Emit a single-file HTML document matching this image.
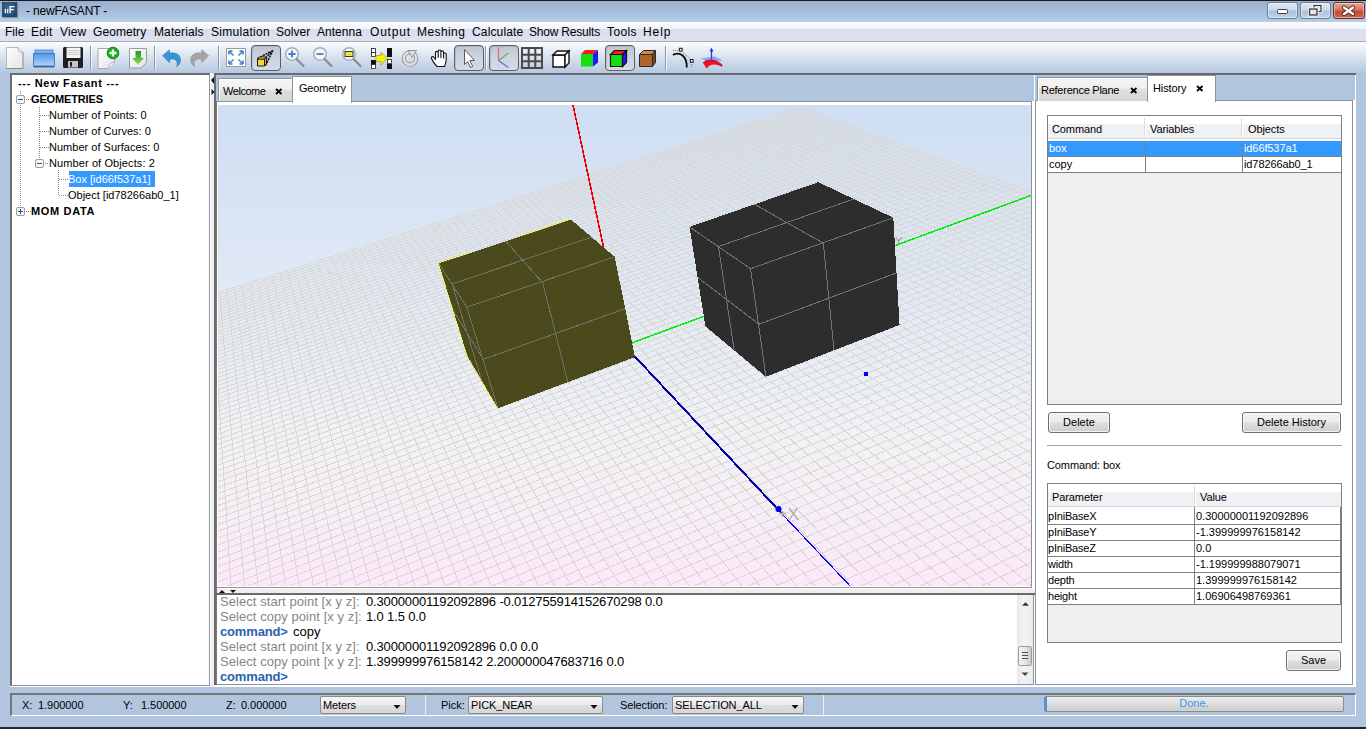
<!DOCTYPE html><html><head><meta charset="utf-8"><style>
*{margin:0;padding:0;box-sizing:border-box}
html,body{width:1366px;height:729px;overflow:hidden}
body{position:relative;background:#b1c5df;font-family:"Liberation Sans", sans-serif;font-size:11px;color:#000}
.a{position:absolute}
.t{position:absolute;white-space:pre;line-height:1;font-family:"Liberation Sans", sans-serif}
svg{position:absolute;overflow:visible}
</style></head><body><div class="a" style="left:0px;top:0px;width:1366px;height:1px;background:#1e1a18"></div>
<div class="a" style="left:0px;top:1px;width:1366px;height:21px;background:linear-gradient(#98b0cd,#a7bfdb 55%,#b6cee7)"></div>
<div class="a" style="left:2px;top:2px;width:15px;height:15px;background:radial-gradient(circle at 45% 40%,#3f6f98,#21486c 75%,#1c3d5c);box-shadow:1px 1px 1px rgba(0,0,0,.25)"></div>
<svg style="left:0;top:0" width="20" height="20"><path d="M5.4 9v4.2M7.7 9v4.2" stroke="#fff" stroke-width="1.2"/><path d="M10.1 13.2V6.6h4.3M10.1 9.6h3.7" stroke="#fff" stroke-width="1.3" fill="none"/></svg>
<div class="t" style="left:26px;top:5px;font-size:12px;color:#000;font-weight:normal;letter-spacing:-0.15px">- newFASANT -</div>
<div class="a" style="left:1267px;top:2px;width:31px;height:17px;border:1px solid #6d7f97;border-radius:3px;background:linear-gradient(#dbe7f4,#c9daee 48%,#a9c0dc 52%,#bcd3ec);box-shadow:inset 0 0 0 1px rgba(255,255,255,.45)"></div>
<div class="a" style="left:1300px;top:2px;width:31px;height:17px;border:1px solid #6d7f97;border-radius:3px;background:linear-gradient(#dbe7f4,#c9daee 48%,#a9c0dc 52%,#bcd3ec);box-shadow:inset 0 0 0 1px rgba(255,255,255,.45)"></div>
<div class="a" style="left:1333px;top:2px;width:32px;height:17px;border:1px solid #6b2d25;border-radius:3px;background:linear-gradient(#e6a492,#d37762 48%,#c24a2c 52%,#d0684a);box-shadow:inset 0 0 0 1px rgba(255,255,255,.45)"></div>
<svg style="left:1260px;top:0" width="106" height="22"><rect x="17.5" y="9.5" width="10" height="4" rx="1" fill="#fff" stroke="#3c3c3c"/><rect x="54" y="5.5" width="7" height="6" fill="none" stroke="#fff" stroke-width="3"/><rect x="54" y="5.5" width="7" height="6" fill="none" stroke="#3c3c3c" stroke-width="1.3"/><rect x="49.5" y="9" width="7.5" height="6" fill="#c9d9ec" stroke="#fff" stroke-width="3"/><rect x="49.5" y="9" width="7.5" height="6" fill="#c9d9ec" stroke="#3c3c3c" stroke-width="1.3"/><rect x="51.5" y="11" width="3.5" height="2" fill="none" stroke="#fff" stroke-width=".8"/><path d="M84 7.5l9 6.5M93 7.5l-9 6.5" stroke="#4a2a25" stroke-width="4.2" stroke-linecap="round"/><path d="M84 7.5l9 6.5M93 7.5l-9 6.5" stroke="#fff" stroke-width="2.4" stroke-linecap="round"/></svg>
<div class="a" style="left:0px;top:22px;width:1366px;height:19px;background:linear-gradient(#fbfcfe,#f1f3f9 35%,#dadfee 36%,#dce2f0)"></div>
<div class="a" style="left:0px;top:41px;width:1366px;height:1px;background:#a9acb3"></div>
<div class="t" style="left:5px;top:26px;font-size:12px;color:#000;font-weight:normal;letter-spacing:0px">File</div>
<div class="t" style="left:31px;top:26px;font-size:12px;color:#000;font-weight:normal;letter-spacing:0.2px">Edit</div>
<div class="t" style="left:60px;top:26px;font-size:12px;color:#000;font-weight:normal;letter-spacing:0.1px">View</div>
<div class="t" style="left:93px;top:26px;font-size:12px;color:#000;font-weight:normal;letter-spacing:0.07px">Geometry</div>
<div class="t" style="left:154px;top:26px;font-size:12px;color:#000;font-weight:normal;letter-spacing:0.11px">Materials</div>
<div class="t" style="left:211px;top:26px;font-size:12px;color:#000;font-weight:normal;letter-spacing:0.3px">Simulation</div>
<div class="t" style="left:276px;top:26px;font-size:12px;color:#000;font-weight:normal;letter-spacing:0.06px">Solver</div>
<div class="t" style="left:317px;top:26px;font-size:12px;color:#000;font-weight:normal;letter-spacing:0.03px">Antenna</div>
<div class="t" style="left:370px;top:26px;font-size:12px;color:#000;font-weight:normal;letter-spacing:0.8px">Output</div>
<div class="t" style="left:417px;top:26px;font-size:12px;color:#000;font-weight:normal;letter-spacing:0.42px">Meshing</div>
<div class="t" style="left:472px;top:26px;font-size:12px;color:#000;font-weight:normal;letter-spacing:0.15px">Calculate</div>
<div class="t" style="left:529px;top:26px;font-size:12px;color:#000;font-weight:normal;letter-spacing:-0.2px">Show Results</div>
<div class="t" style="left:607px;top:26px;font-size:12px;color:#000;font-weight:normal;letter-spacing:0.4px">Tools</div>
<div class="t" style="left:643px;top:26px;font-size:12px;color:#000;font-weight:normal;letter-spacing:0.9px">Help</div>
<div class="a" style="left:0px;top:42px;width:1366px;height:31px;background:linear-gradient(#fefeff,#e9eff7 25%,#cfdbeb 62%,#b5c8e1)"></div>
<div class="a" style="left:90px;top:46px;width:1px;height:24px;background:#8e99a8;box-shadow:1px 0 0 rgba(255,255,255,.8)"></div>
<div class="a" style="left:154px;top:46px;width:1px;height:24px;background:#8e99a8;box-shadow:1px 0 0 rgba(255,255,255,.8)"></div>
<div class="a" style="left:218px;top:46px;width:1px;height:24px;background:#8e99a8;box-shadow:1px 0 0 rgba(255,255,255,.8)"></div>
<div class="a" style="left:485px;top:46px;width:1px;height:24px;background:#8e99a8;box-shadow:1px 0 0 rgba(255,255,255,.8)"></div>
<div class="a" style="left:665px;top:46px;width:1px;height:24px;background:#8e99a8;box-shadow:1px 0 0 rgba(255,255,255,.8)"></div>
<div class="a" style="left:251px;top:45px;width:30px;height:26px;border:1px solid #5a6068;border-radius:4px;background:linear-gradient(#bfc6d1,#cdd4de 50%,#d3dbe6);box-shadow:inset 1px 1px 1px rgba(0,0,0,.1)"></div>
<div class="a" style="left:454px;top:45px;width:30px;height:26px;border:1px solid #5a6068;border-radius:4px;background:linear-gradient(#bfc6d1,#cdd4de 50%,#d3dbe6);box-shadow:inset 1px 1px 1px rgba(0,0,0,.1)"></div>
<div class="a" style="left:489px;top:45px;width:30px;height:26px;border:1px solid #5a6068;border-radius:4px;background:linear-gradient(#bfc6d1,#cdd4de 50%,#d3dbe6);box-shadow:inset 1px 1px 1px rgba(0,0,0,.1)"></div>
<div class="a" style="left:605px;top:45px;width:30px;height:26px;border:1px solid #5a6068;border-radius:4px;background:linear-gradient(#bfc6d1,#cdd4de 50%,#d3dbe6);box-shadow:inset 1px 1px 1px rgba(0,0,0,.1)"></div>
<svg style="left:0;top:0" width="740" height="76"><defs><linearGradient id="pg" x1="0" y1="0" x2="1" y2="1"><stop offset="0" stop-color="#ffffff"/><stop offset="1" stop-color="#e2e2e2"/></linearGradient><linearGradient id="fg" x1="0" y1="0" x2="0" y2="1"><stop offset="0" stop-color="#5896e6"/><stop offset="1" stop-color="#acd2fa"/></linearGradient></defs><path d="M6.5 47.5h11.5l5 5v16h-16.5z" fill="url(#pg)" stroke="#b8b8b8"/><path d="M23 68.5h-16.5" stroke="#8a8a8a"/><path d="M23 52.5v16" stroke="#a0a0a0"/><path d="M18 47.5c.5 3 0 5 5 5" fill="#e8e8e8" stroke="#b0b0b0"/><rect x="35" y="50" width="18" height="3.5" fill="#80aee6" stroke="#4a86d0" stroke-width=".8"/><rect x="33.5" y="53.5" width="21" height="12.5" fill="url(#fg)" stroke="#3f7fd0" stroke-width="1"/><path d="M34 66.8h20" stroke="#3c4a60" stroke-width="1.2"/><rect x="63" y="47" width="20" height="21" rx="1.5" fill="#1e1f24"/><rect x="66.5" y="47.5" width="14" height="10.5" fill="#f4f4f4"/><path d="M67.5 50.5h12M67.5 52.5h12M67.5 54.5h12" stroke="#c8c4be" stroke-width=".8"/><rect x="68" y="61" width="10" height="6.5" fill="#c4c4c4"/><rect x="70" y="62" width="2" height="4.5" fill="#1e1f24"/><path d="M98 48.5h16.5v14l-6 6h-10.5z" fill="url(#pg)" stroke="#a8a8a8"/><path d="M108.5 68.5c0-3 .5-6 6-6" fill="#f4f4f4" stroke="#b4b4b4"/><circle cx="113" cy="53" r="5.8" fill="#1eaa1e" stroke="#0a8a0a"/><path d="M109.5 53h7M113 49.5v7" stroke="#fff" stroke-width="2.3"/><defs><linearGradient id="ag" x1="0" y1="0" x2="0" y2="1"><stop offset="0" stop-color="#1c9a2a"/><stop offset="1" stop-color="#8cdc5a"/></linearGradient></defs><path d="M129.5 48.5h17v14l-5.5 5.5h-11.5z" fill="url(#pg)" stroke="#9c9c9c"/><path d="M135.5 51h5.5v7h3l-6 6.5-6-6.5h3.5z" fill="url(#ag)"/><path d="M162.5 57.5L169.5 51.5V55C175.5 53.5 181 56.5 180.5 62.5C180.3 65 178.8 67 176.5 68.5C177.8 65.5 177.3 62.5 174.5 61.3C172.8 60.6 171 60.8 169.5 61.5V64.5Z" fill="#3296d8" stroke="#2a70b0" stroke-width=".5" transform="translate(0,-1.8)"/><path d="M 208.75 57.50 L 201.75 51.50 V 55.00 C 195.75 53.50 190.25 56.50 190.75 62.50 C 190.95 65.00 192.45 67.00 194.75 68.50 C 193.45 65.50 193.95 62.50 196.75 61.30 C 198.45 60.60 200.25 60.80 201.75 61.50 V 64.50 Z" fill="#a4a4a4" stroke="#8a8a8a" stroke-width=".5" transform="translate(0,-1.8)"/><rect x="226.5" y="48.5" width="19" height="18" fill="#fdfdfd" stroke="#9a9a9a"/><path d="M229.5 51.5l4 4M242.5 51.5l-4 4M229.5 63.5l4-4M242.5 63.5l-4-4" stroke="#3a7cc8" stroke-width="1.4"/><path d="M229 51h3.5M229 51v3.5M243 51h-3.5M243 51v3.5M229 64h3.5M229 64v-3.5M243 64h-3.5M243 64v-3.5" stroke="#3a7cc8" stroke-width="1.6"/><path d="M257.5 58.5L273 50.5M265.5 58L273 50.5M265.5 65.5L273 50.5" stroke="#111" stroke-width="1.5" stroke-dasharray="2.2 .8" fill="none"/><path d="M257.5 66l7 0 0-7-7 0z" fill="#f8d838" stroke="#1a1a1a" stroke-width="1"/><path d="M257.5 59l2-2h7l-2 2z" fill="#fff27a" stroke="#1a1a1a" stroke-width="1"/><path d="M264.5 59l2-2v7l-2 2z" fill="#f0a020" stroke="#1a1a1a" stroke-width="1"/><circle cx="292" cy="54" r="6.3" fill="#f4f7fb" stroke="#a7aeb6" stroke-width="1.6"/><path d="M288.5 54h7M292 50.5v7" stroke="#3a80d0" stroke-width="1.8"/><path d="M296.5 59l7 7" stroke="#8c8c8c" stroke-width="2.2" stroke-linecap="round"/><circle cx="320" cy="54" r="6.3" fill="#f4f7fb" stroke="#a7aeb6" stroke-width="1.6"/><path d="M316.5 54h7" stroke="#3a80d0" stroke-width="1.8"/><path d="M324.5 59l7 7" stroke="#8c8c8c" stroke-width="2.2" stroke-linecap="round"/><circle cx="349" cy="54" r="6.3" fill="#f4f7fb" stroke="#a7aeb6" stroke-width="1.6"/><rect x="345" y="51.5" width="8" height="5" fill="#f2e040" stroke="#222" stroke-width=".9"/><path d="M353.5 59l7 7" stroke="#8c8c8c" stroke-width="2.2" stroke-linecap="round"/><rect x="371.5" y="48.5" width="4" height="4" fill="#fff" stroke="#222" stroke-width=".8"/><rect x="371.5" y="52.5" width="4" height="4" fill="#fff" stroke="#222" stroke-width=".8"/><rect x="371" y="60" width="5" height="5" fill="#111"/><rect x="371.5" y="64.5" width="4" height="4" fill="#fff" stroke="#222" stroke-width=".8"/><rect x="387" y="48" width="5" height="9" fill="#111"/><rect x="387.5" y="59.5" width="4" height="4" fill="#fff" stroke="#222" stroke-width=".8"/><rect x="387" y="64" width="5" height="5" fill="#111"/><path d="M376 55.5h5v-3.5l6 6.5-6 6.5v-3.5h-5z" fill="#f6ee10" stroke="#9a9000" stroke-width=".6"/><circle cx="410" cy="58.5" r="6.2" fill="none" stroke="#8e8e8e" stroke-width="4.2"/><circle cx="410" cy="58.5" r="6.2" fill="none" stroke="#e2e2e2" stroke-width="2.4"/><path d="M408 50.5h8.5l-4.5 7z" fill="#dcdcdc" stroke="#8e8e8e" stroke-width=".9"/><path d="M437 66.5C435 64.5 432.5 61 431.5 58.5C430.8 56.8 432.8 55.8 434 57.5L435.5 59.5V52.8C435.5 50.9 438.2 50.9 438.2 52.8V57.5V51.5C438.2 49.6 440.9 49.6 440.9 51.5V57.5V52.3C440.9 50.4 443.6 50.4 443.6 52.3V58V54.3C443.6 52.6 446.2 52.6 446.2 54.3V59.5C446.2 62.5 445 64.5 444.5 66.5Z" fill="#fff" stroke="#111" stroke-width="1.1" stroke-linejoin="round"/><path d="M464.5 49.5v15l3.2-3 2.8 6 2.2-1-2.8-6h4.6z" fill="#fff" stroke="#5a5a5a" stroke-width="1"/><path d="M498.5 47.5v13" stroke="#e07070" stroke-width="1.3"/><path d="M498.5 60.5l10-7.5" stroke="#50c050" stroke-width="1.3"/><path d="M498.5 60.5l10 7" stroke="#6a6ae0" stroke-width="1.3"/><rect x="522" y="48" width="20" height="20" fill="none" stroke="#4a4a4a" stroke-width="2"/><path d="M528.7 48v20M535.3 48v20M522 54.7h20M522 61.3h20" stroke="#4a4a4a" stroke-width="2"/><path d="M553 55h12v12h-12z" fill="#fff" stroke="#111" stroke-width="1.4"/><path d="M553 55l4-4h12l-4 4z" fill="#fff" stroke="#111" stroke-width="1.4"/><path d="M565 55l4-4v12l-4 4z" fill="#fff" stroke="#111" stroke-width="1.4"/><path d="M581 54h12v12.5h-12z" fill="#12e012"/><path d="M581 54l4-4h13l-5 4z" fill="#ff1a1a"/><path d="M593 54l5-4v12.5l-5 4z" fill="#1a1aff"/><path d="M610.5 54.5h12v12h-12z" fill="#12e012" stroke="#111" stroke-width="1.2"/><path d="M610.5 54.5l4-4h12l-4 4z" fill="#ff1a1a" stroke="#111" stroke-width="1.2"/><path d="M622.5 54.5l4-4v12l-4 4z" fill="#1a1aff" stroke="#111" stroke-width="1.2"/><path d="M639.5 54.5h13v12h-13z" fill="#b0642a" stroke="#2a2a2a"/><path d="M639.5 54.5l4-4h12l-3 4z" fill="#cf8a4a" stroke="#2a2a2a"/><path d="M652.5 54.5l3-4v12l-3 4z" fill="#7a4218" stroke="#2a2a2a"/><path d="M673 54.8C680 51.5 687 55.5 686.8 67.5" fill="none" stroke="#111" stroke-width="1.9"/><rect x="679.3" y="48.3" width="2.8" height="2.8" fill="#fff" stroke="#111" stroke-width="1"/><rect x="690.3" y="59.5" width="2.8" height="2.8" fill="#fff" stroke="#111" stroke-width="1"/><path d="M673 50.5h5M683 52.5l6.5 6M691.7 64v4" stroke="#444" stroke-width=".8" stroke-dasharray="1 1.2"/><path d="M701 58.5L714.5 56.5L722.5 60.5L709 62.3z" fill="#8890f0" opacity=".85"/><path d="M703 62.8C707 59.3 716 58.5 722.5 65.5L721.5 66.8C716 63.5 710 63.5 706.5 68.5z" fill="#f01020"/><path d="M703 62.8C707 59.3 716 58.5 722.5 65.5" fill="none" stroke="#900018" stroke-width=".8"/><path d="M711.5 59.5V50" stroke="#2030f0" stroke-width="1.3"/><path d="M709.6 51.6L711.5 47.6L713.4 51.6z" fill="#2030f0"/></svg>
<div class="a" style="left:10px;top:73px;width:200px;height:613px;background:#fff;border-top:2px solid #6e6e6e;border-left:2px solid #6e6e6e;border-right:1px solid #8d939b;border-bottom:1px solid #8d939b"></div>
<div class="a" style="left:10px;top:686px;width:201px;height:1px;background:#fff"></div>
<div class="t" style="left:18px;top:78px;font-size:11px;color:#000;font-weight:bold;letter-spacing:0.67px">--- New Fasant ---</div>
<div class="t" style="left:31px;top:94px;font-size:11px;color:#000;font-weight:bold;letter-spacing:-0.15px">GEOMETRIES</div>
<div class="t" style="left:49px;top:110px;font-size:11px;color:#000;font-weight:normal;letter-spacing:0.02px">Number of Points: 0</div>
<div class="t" style="left:49px;top:126px;font-size:11px;color:#000;font-weight:normal;letter-spacing:0.02px">Number of Curves: 0</div>
<div class="t" style="left:49px;top:142px;font-size:11px;color:#000;font-weight:normal;letter-spacing:0.02px">Number of Surfaces: 0</div>
<div class="t" style="left:49px;top:158px;font-size:11px;color:#000;font-weight:normal;letter-spacing:0.1px">Number of Objects: 2</div>
<div class="a" style="left:69px;top:171px;width:86px;height:16px;background:#3399ff"></div>
<div class="t" style="left:68px;top:174px;font-size:11px;color:#fff;font-weight:normal;">Box [id66f537a1]</div>
<div class="t" style="left:68px;top:190px;font-size:11px;color:#000;font-weight:normal;">Object [id78266ab0_1]</div>
<div class="t" style="left:31px;top:206px;font-size:11px;color:#000;font-weight:bold;letter-spacing:0.65px">MOM DATA</div>
<svg style="left:0;top:0" width="212" height="230"><path d="M20.5 91V95" stroke="#8a8a8a" stroke-dasharray="1 1"/><path d="M20.5 105V207" stroke="#8a8a8a" stroke-dasharray="1 1"/><path d="M26 99.5H31" stroke="#8a8a8a" stroke-dasharray="1 1"/><path d="M26 211.5H31" stroke="#8a8a8a" stroke-dasharray="1 1"/><path d="M39.5 107V159" stroke="#8a8a8a" stroke-dasharray="1 1"/><path d="M40 115.5H49" stroke="#8a8a8a" stroke-dasharray="1 1"/><path d="M40 131.5H49" stroke="#8a8a8a" stroke-dasharray="1 1"/><path d="M40 147.5H49" stroke="#8a8a8a" stroke-dasharray="1 1"/><path d="M45 163.5H49" stroke="#8a8a8a" stroke-dasharray="1 1"/><path d="M58.5 170V195" stroke="#8a8a8a" stroke-dasharray="1 1"/><path d="M59 179.5H68" stroke="#8a8a8a" stroke-dasharray="1 1"/><path d="M59 195.5H68" stroke="#8a8a8a" stroke-dasharray="1 1"/><rect x="16.5" y="95.5" width="8" height="8" fill="#f6f6f6" stroke="#9c9c9c" rx="1.5"/><path d="M18 99.5h5" stroke="#3050a8"/><rect x="35.5" y="159.5" width="8" height="8" fill="#f6f6f6" stroke="#9c9c9c" rx="1.5"/><path d="M37 163.5h5" stroke="#3050a8"/><rect x="16.5" y="207.5" width="8" height="8" fill="#f6f6f6" stroke="#9c9c9c" rx="1.5"/><path d="M18 211.5h5" stroke="#3050a8"/><path d="M20.5 209v5" stroke="#3050a8"/></svg>
<div class="a" style="left:210px;top:73px;width:1px;height:614px;background:#fff"></div>
<div class="a" style="left:211px;top:73px;width:3px;height:614px;background:#efefef"></div>
<svg style="left:208px;top:74px" width="8" height="30"><path d="M3 6l3-3v7z" fill="#111"/><path d="M3.5 15l3 3-3 3z" fill="#111"/></svg>
<div class="a" style="left:214px;top:73px;width:821px;height:2px;background:#6a6a6a"></div>
<div class="a" style="left:214px;top:75px;width:2px;height:612px;background:#6a6a6a"></div>
<div class="a" style="left:216px;top:101px;width:1px;height:586px;background:#7a7a7a"></div>
<div class="a" style="left:218px;top:78px;width:75px;height:24px;border:1px solid #8d939b;border-bottom:none;background:linear-gradient(#f6f6f6,#efefef 42%,#dedede 52%,#d5d5d5);box-shadow:inset 1px 1px 0 #fff"></div>
<div class="t" style="left:223px;top:86px;font-size:11px;color:#000;font-weight:normal;letter-spacing:-0.45px">Welcome</div>
<svg style="left:275px;top:88px" width="8" height="7"><path d="M1 1l5.5 5M6.5 1l-5.5 5" stroke="#000" stroke-width="1.8"/></svg>
<div class="a" style="left:217px;top:101px;width:815px;height:487px;background:#fff;border-top:1px solid #8d939b;border-right:1px solid #8d939b;border-bottom:1px solid #8d939b"></div>
<div class="a" style="left:292px;top:76px;width:60px;height:27px;border:1px solid #8d939b;border-bottom:none;background:#fff"></div>
<div class="t" style="left:299px;top:83px;font-size:11px;color:#000;font-weight:normal;letter-spacing:-0.2px">Geometry</div>
<svg style="left:218px;top:105px" width="813" height="481"><defs><linearGradient id="sky" x1="0" y1="0" x2="0" y2="1"><stop offset="0" stop-color="#cfdef3"/><stop offset=".4" stop-color="#e1e9f5"/><stop offset=".7" stop-color="#f1f2f5"/><stop offset=".85" stop-color="#f7eef6"/><stop offset="1" stop-color="#fde8f9"/></linearGradient><clipPath id="vc"><rect width="813" height="481"/></clipPath></defs><g clip-path="url(#vc)"><rect width="813" height="481" fill="url(#sky)"/><path d="M-92.4 217.0L582.5 2.3M-92.8 219.9L585.9 3.6M-93.2 222.9L589.4 4.9M-93.6 225.9L592.9 6.2M-94.0 228.9L596.5 7.5M-94.4 232.0L600.1 8.8M-94.8 235.1L603.7 10.1M-95.2 238.3L607.4 11.5M-95.7 241.5L611.1 12.8M-96.1 244.7L614.9 14.2M-96.5 248.0L618.7 15.6M-97.0 251.3L622.6 17.0M-97.4 254.7L626.5 18.4M-97.9 258.2L630.4 19.9M-98.4 261.7L634.4 21.3M-98.8 265.2L638.5 22.8M-99.3 268.8L642.5 24.3M-99.8 272.4L646.7 25.8M-100.3 276.1L650.9 27.4M-100.8 279.9L655.1 28.9M-101.3 283.7L659.4 30.5M-101.8 287.6L663.8 32.1M-102.4 291.5L668.2 33.7M-102.9 295.5L672.7 35.3M-103.4 299.5L677.2 37.0M-104.0 303.6L681.8 38.6M-104.6 307.8L686.4 40.3M-105.1 312.1L691.1 42.1M-105.7 316.4L695.9 43.8M-106.3 320.8L700.7 45.6M-106.9 325.2L705.6 47.4M-107.5 329.8L710.6 49.2M-108.1 334.4L715.6 51.0M-108.7 339.1L720.7 52.9M-109.4 343.8L725.9 54.8M-110.0 348.7L731.1 56.7M-110.7 353.6L736.4 58.6M-111.4 358.6L741.8 60.6M-112.0 363.7L747.3 62.6M-112.7 368.9L752.8 64.6M-113.5 374.2L758.4 66.6M-114.2 379.6L764.1 68.7M-114.9 385.1L769.9 70.8M-115.7 390.6L775.8 73.0M-116.4 396.3L781.7 75.2M-117.2 402.1L787.7 77.4M-118.0 408.0L793.9 79.6M-118.8 414.0L800.1 81.9M-119.6 420.1L806.4 84.2M-120.4 426.4L812.8 86.5M-121.3 432.8L819.3 88.9M-122.2 439.3L825.9 91.3M-123.1 445.9L832.6 93.8M-124.0 452.6L839.5 96.3M-124.9 459.5L846.4 98.8M-125.8 466.6L853.4 101.4M-126.8 473.8L860.6 104.0M-127.8 481.1L867.8 106.6M-128.8 488.6L875.2 109.3M-129.8 496.3L882.7 112.1M-130.9 504.1L890.4 114.9M-131.9 512.1L898.1 117.7M-133.0 520.2L906.0 120.6M-134.1 528.6L914.1 123.5M-135.3 537.1L922.2 126.5M-136.5 545.9L930.5 129.6M-137.7 554.8L939.0 132.6M-138.9 564.0L947.6 135.8M-140.1 573.4L956.4 139.0M-141.4 583.0L965.3 142.2M-142.8 592.8L974.3 145.6M-144.1 602.9L983.6 148.9M-145.5 613.2L993.0 152.4M-146.9 623.8L1002.6 155.9M-148.4 634.7L1012.4 159.5M-149.9 645.8L1022.3 163.1M-151.4 657.3L1032.5 166.8M-153.0 669.0L1042.8 170.6M-154.6 681.1L1053.4 174.4M-156.2 693.5L1064.1 178.4M-158.0 706.2L1075.1 182.4M-159.7 719.3L1086.3 186.5M-161.5 732.8L1097.7 190.7M-163.4 746.6L1109.4 194.9M-165.3 760.9L1121.3 199.3M-167.3 775.6L1133.4 203.7M-169.3 790.8L1145.9 208.2M-171.4 806.4L1158.5 212.9M-173.5 822.5L1171.5 217.6M-175.8 839.1L1184.7 222.4M-178.1 856.2L1198.3 227.4M-180.4 874.0L1212.1 232.4M-182.9 892.3L1226.2 237.6M-185.4 911.2L1240.7 242.9M-188.0 930.8L1255.5 248.3M-190.8 951.0L1270.7 253.9M-193.6 972.0L1286.2 259.5M-196.5 993.8L1302.1 265.3M-199.5 1016.3L1318.4 271.3M-202.7 1039.8L1335.1 277.4M-205.9 1064.1L1352.2 283.6M-92.4 217.0L-205.9 1064.1M-84.4 214.5L-182.0 1052.1M-76.5 211.9L-158.4 1040.3M-68.5 209.4L-135.0 1028.6M-60.6 206.9L-111.9 1017.0M-52.8 204.4L-89.0 1005.5M-44.9 201.9L-66.4 994.2M-37.1 199.4L-44.0 982.9M-29.3 197.0L-21.8 971.8M-21.6 194.5L0.2 960.8M-13.9 192.0L21.9 950.0M-6.2 189.6L43.4 939.2M1.5 187.2L64.7 928.5M9.1 184.7L85.8 918.0M16.7 182.3L106.6 907.5M24.3 179.9L127.3 897.2M31.9 177.5L147.7 887.0M39.4 175.1L167.9 876.8M46.9 172.7L188.0 866.8M54.4 170.3L207.8 856.8M61.8 168.0L227.5 847.0M69.3 165.6L246.9 837.3M76.7 163.2L266.2 827.6M84.0 160.9L285.3 818.0M91.4 158.6L304.2 808.6M98.7 156.2L322.9 799.2M106.0 153.9L341.4 789.9M113.3 151.6L359.8 780.7M120.5 149.3L378.0 771.6M127.7 147.0L396.0 762.6M134.9 144.7L413.9 753.6M142.1 142.4L431.6 744.8M149.2 140.2L449.1 736.0M156.3 137.9L466.5 727.3M163.4 135.6L483.7 718.7M170.5 133.4L500.7 710.1M177.5 131.2L517.6 701.7M184.5 128.9L534.4 693.3M191.5 126.7L551.0 685.0M198.5 124.5L567.4 676.7M205.5 122.3L583.7 668.6M212.4 120.1L599.9 660.5M219.3 117.9L615.9 652.4M226.1 115.7L631.8 644.5M233.0 113.5L647.5 636.6M239.8 111.3L663.1 628.8M246.6 109.2L678.5 621.1M253.4 107.0L693.9 613.4M260.2 104.9L709.1 605.8M266.9 102.7L724.1 598.2M273.6 100.6L739.1 590.7M280.3 98.5L753.9 583.3M287.0 96.3L768.6 576.0M293.6 94.2L783.1 568.7M300.2 92.1L797.6 561.4M306.8 90.0L811.9 554.3M313.4 87.9L826.1 547.2M320.0 85.8L840.2 540.1M326.5 83.8L854.1 533.1M333.0 81.7L868.0 526.2M339.5 79.6L881.7 519.3M346.0 77.6L895.4 512.5M352.4 75.5L908.9 505.7M358.8 73.5L922.3 499.0M365.2 71.4L935.6 492.3M371.6 69.4L948.8 485.7M378.0 67.4L961.9 479.1M384.3 65.4L974.9 472.6M390.6 63.4L987.7 466.2M396.9 61.4L1000.5 459.8M403.2 59.4L1013.2 453.4M409.5 57.4L1025.8 447.1M415.7 55.4L1038.3 440.9M421.9 53.4L1050.7 434.7M428.1 51.4L1062.9 428.5M434.3 49.5L1075.1 422.4M440.5 47.5L1087.2 416.4M446.6 45.6L1099.2 410.3M452.7 43.6L1111.2 404.4M458.8 41.7L1123.0 398.4M464.9 39.7L1134.7 392.6M471.0 37.8L1146.4 386.7M477.0 35.9L1157.9 380.9M483.0 34.0L1169.4 375.2M489.0 32.1L1180.8 369.5M495.0 30.2L1192.1 363.8M501.0 28.3L1203.3 358.2M506.9 26.4L1214.5 352.6M512.8 24.5L1225.5 347.1M518.7 22.6L1236.5 341.6M524.6 20.7L1247.4 336.1M530.5 18.9L1258.2 330.7M536.3 17.0L1269.0 325.3M542.2 15.2L1279.6 320.0M548.0 13.3L1290.2 314.7M553.8 11.5L1300.7 309.4M559.5 9.6L1311.2 304.2M565.3 7.8L1321.5 299.0M571.0 6.0L1331.8 293.8M576.8 4.2L1342.0 288.7M582.5 2.3L1352.2 283.6" stroke="#d9d8d5" stroke-width="1" fill="none" shape-rendering="crispEdges"/><line x1="354.8" y1="-1.0" x2="406.7" y2="240.6" stroke="#f00000" stroke-width="1.6" shape-rendering="crispEdges"/><line x1="406.7" y1="240.6" x2="814.0" y2="90.0" stroke="#00ee00" stroke-width="1.5" shape-rendering="crispEdges"/><line x1="406.7" y1="240.6" x2="560.0" y2="404.6" stroke="#0000a0" stroke-width="2" shape-rendering="crispEdges"/><line x1="560.0" y1="404.6" x2="634.0" y2="483.0" stroke="#0000ff" stroke-width="1.2" shape-rendering="crispEdges"/><circle cx="560.5" cy="404" r="3.1" fill="#0000f0"/><path d="M571 403L580.5 415M579.5 403L571.5 414.5M561 408.5h7M564.5 406v6" stroke="#a8a8a8" stroke-width="1.3" fill="none"/><path d="M677.5 132L680.5 136L684 132.5M680.5 136V139.5" stroke="#9a9a9a" stroke-width="1.1" fill="none"/><polygon points="220.7,158.4 353.0,114.6 396.7,151.8 417.0,252.0 279.9,303.3 249.4,251.1" fill="#4b4a1c" shape-rendering="crispEdges"/><line x1="248.8" y1="202.2" x2="396.7" y2="151.8" stroke="#727268" stroke-width="1" shape-rendering="crispEdges"/><line x1="248.8" y1="202.2" x2="279.9" y2="303.3" stroke="#727268" stroke-width="1" shape-rendering="crispEdges"/><line x1="248.8" y1="202.2" x2="220.7" y2="158.4" stroke="#727268" stroke-width="1" shape-rendering="crispEdges"/><line x1="373.6" y1="132.1" x2="233.9" y2="179.0" stroke="#727268" stroke-width="1" shape-rendering="crispEdges"/><line x1="287.7" y1="136.2" x2="323.8" y2="176.7" stroke="#727268" stroke-width="1" shape-rendering="crispEdges"/><line x1="407.2" y1="203.6" x2="264.9" y2="254.5" stroke="#727268" stroke-width="1" shape-rendering="crispEdges"/><line x1="324.4" y1="176.4" x2="349.9" y2="277.1" stroke="#727268" stroke-width="1" shape-rendering="crispEdges"/><line x1="264.5" y1="253.1" x2="235.1" y2="205.0" stroke="#727268" stroke-width="1" shape-rendering="crispEdges"/><line x1="234.1" y1="179.3" x2="263.9" y2="276.0" stroke="#727268" stroke-width="1" shape-rendering="crispEdges"/><polyline points="279.3,303.3 248.8,251.1 220.1,158.0 251.7,147.6" fill="none" stroke="#ffff00" stroke-width="1.3" stroke-dasharray="1.3 1.7"/><polyline points="300.1,131.6 353.0,114.0" fill="none" stroke="#ffff00" stroke-width="1.3" stroke-dasharray="1.3 1.7"/><polygon points="471.5,121.9 600.3,77.2 675.3,112.7 681.6,219.9 547.9,271.7 487.4,221.3" fill="#2d2d2d" shape-rendering="crispEdges"/><line x1="532.6" y1="163.7" x2="675.3" y2="112.7" stroke="#737373" stroke-width="1" shape-rendering="crispEdges"/><line x1="532.6" y1="163.7" x2="547.9" y2="271.7" stroke="#737373" stroke-width="1" shape-rendering="crispEdges"/><line x1="532.6" y1="163.7" x2="471.5" y2="121.9" stroke="#737373" stroke-width="1" shape-rendering="crispEdges"/><line x1="635.7" y1="94.0" x2="500.3" y2="141.6" stroke="#737373" stroke-width="1" shape-rendering="crispEdges"/><line x1="536.6" y1="99.3" x2="604.8" y2="137.9" stroke="#737373" stroke-width="1" shape-rendering="crispEdges"/><line x1="678.5" y1="167.9" x2="540.5" y2="219.4" stroke="#737373" stroke-width="1" shape-rendering="crispEdges"/><line x1="605.3" y1="137.7" x2="616.0" y2="245.3" stroke="#737373" stroke-width="1" shape-rendering="crispEdges"/><line x1="540.4" y1="218.7" x2="479.6" y2="172.4" stroke="#737373" stroke-width="1" shape-rendering="crispEdges"/><line x1="500.5" y1="141.8" x2="516.2" y2="245.3" stroke="#737373" stroke-width="1" shape-rendering="crispEdges"/><rect x="646" y="267" width="4" height="4" fill="#0000ff"/></g></svg>
<div class="a" style="left:1032px;top:101px;width:2px;height:492px;background:#fff"></div>
<div class="a" style="left:1034px;top:75px;width:1px;height:612px;background:#fff"></div>
<div class="a" style="left:217px;top:588px;width:818px;height:5px;background:#efefef;border-top:1px solid #fff"></div>
<svg style="left:218px;top:589px" width="20" height="5"><path d="M1 4l3-3 3 3z" fill="#111"/><path d="M12 1h6l-3 3z" fill="#111"/></svg>
<div class="a" style="left:214px;top:593px;width:821px;height:2px;background:#6a6a6a"></div>
<div class="a" style="left:217px;top:595px;width:817px;height:90px;background:#fff;border-right:1px solid #8d939b;border-bottom:1px solid #8d939b"></div>
<div class="a" style="left:214px;top:685px;width:821px;height:2px;background:#fff"></div>
<div class="t" style="left:220px;top:595px;font-size:13px;color:#868686;font-weight:normal;letter-spacing:0.06px">Select start point [x y z]:</div>
<div class="t" style="left:366px;top:595px;font-size:13px;color:#000;font-weight:normal;letter-spacing:-0.15px">0.30000001192092896 -0.012755914152670298 0.0</div>
<div class="t" style="left:220px;top:610px;font-size:13px;color:#868686;font-weight:normal;letter-spacing:0.06px">Select copy point [x y z]:</div>
<div class="t" style="left:366px;top:610px;font-size:13px;color:#000;font-weight:normal;letter-spacing:-0.15px">1.0 1.5 0.0</div>
<div class="t" style="left:220px;top:625px;font-size:13px;color:#2a62ae;font-weight:bold;letter-spacing:-0.15px">command&gt;</div>
<div class="t" style="left:293px;top:625px;font-size:13px;color:#000;font-weight:normal;">copy</div>
<div class="t" style="left:220px;top:640px;font-size:13px;color:#868686;font-weight:normal;letter-spacing:0.06px">Select start point [x y z]:</div>
<div class="t" style="left:366px;top:640px;font-size:13px;color:#000;font-weight:normal;letter-spacing:-0.15px">0.30000001192092896 0.0 0.0</div>
<div class="t" style="left:220px;top:655px;font-size:13px;color:#868686;font-weight:normal;letter-spacing:0.06px">Select copy point [x y z]:</div>
<div class="t" style="left:366px;top:655px;font-size:13px;color:#000;font-weight:normal;letter-spacing:-0.15px">1.399999976158142 2.200000047683716 0.0</div>
<div class="t" style="left:220px;top:670px;font-size:13px;color:#2a62ae;font-weight:bold;letter-spacing:-0.15px">command&gt;</div>
<div class="a" style="left:1017px;top:595px;width:16px;height:89px;background:linear-gradient(90deg,#e9e9e9,#f3f3f3 45%,#ececec)"></div>
<svg style="left:1017px;top:595px" width="16" height="89"><path d="M5 10.8l3.5-3.6 3.5 3.6z" fill="#333"/><path d="M4.5 77.5l3.5 3.5 3.5-3.5z" fill="#444"/><defs><linearGradient id="th" x1="0" x2="1"><stop offset="0" stop-color="#f4f4f4"/><stop offset=".5" stop-color="#e6e6e6"/><stop offset="1" stop-color="#c8c8c8"/></linearGradient></defs><rect x="1.5" y="51.5" width="13" height="19" rx="2" fill="url(#th)" stroke="#9a9a9a"/><path d="M5 57.5h6M5 60.5h6M5 63.5h6" stroke="#505050"/></svg>
<div class="a" style="left:1035px;top:73px;width:321px;height:2px;background:#6a6a6a"></div>
<div class="a" style="left:1035px;top:100px;width:318px;height:585px;background:#fff;border:1px solid #8d939b"></div>
<div class="a" style="left:1355px;top:75px;width:1px;height:612px;background:#fff"></div>
<div class="a" style="left:1353px;top:100px;width:2px;height:587px;background:#fff"></div>
<div class="a" style="left:1035px;top:685px;width:321px;height:2px;background:#fff"></div>
<div class="a" style="left:1037px;top:77px;width:111px;height:24px;border:1px solid #8d939b;border-bottom:none;background:linear-gradient(#f6f6f6,#efefef 42%,#dedede 52%,#d5d5d5);box-shadow:inset 1px 1px 0 #fff"></div>
<div class="t" style="left:1041px;top:85px;font-size:11px;color:#000;font-weight:normal;letter-spacing:-0.25px">Reference Plane</div>
<svg style="left:1130px;top:87px" width="8" height="7"><path d="M1 1l5.5 5M6.5 1l-5.5 5" stroke="#000" stroke-width="1.8"/></svg>
<div class="a" style="left:1147px;top:75px;width:69px;height:27px;border:1px solid #8d939b;border-bottom:none;background:#fff"></div>
<div class="t" style="left:1153px;top:83px;font-size:11px;color:#000;font-weight:normal;letter-spacing:-0.1px">History</div>
<svg style="left:1196px;top:85px" width="8" height="7"><path d="M1 1l5.5 5M6.5 1l-5.5 5" stroke="#000" stroke-width="1.8"/></svg>
<div class="a" style="left:1047px;top:115px;width:295px;height:290px;background:#efefef;border:1px solid #7c7f84"></div>
<div class="a" style="left:1048px;top:116px;width:293px;height:8px;background:#fff"></div><div class="a" style="left:1048px;top:124px;width:293px;height:14px;background:#f0f1f4"></div><div class="a" style="left:1048px;top:138px;width:293px;height:1px;background:#d8d8d8"></div><div class="a" style="left:1144px;top:118px;width:1px;height:20px;background:#dcdcdc"></div><div class="a" style="left:1145px;top:118px;width:1px;height:20px;background:#fff"></div><div class="a" style="left:1241px;top:118px;width:1px;height:20px;background:#dcdcdc"></div><div class="a" style="left:1242px;top:118px;width:1px;height:20px;background:#fff"></div><div class="t" style="left:1052px;top:124px;font-size:11px;color:#000;font-weight:normal;letter-spacing:-0.1px">Command</div><div class="t" style="left:1150px;top:124px;font-size:11px;color:#000;font-weight:normal;letter-spacing:-0.1px">Variables</div><div class="t" style="left:1248px;top:124px;font-size:11px;color:#000;font-weight:normal;letter-spacing:-0.1px">Objects</div>
<div class="a" style="left:1048px;top:139px;width:293px;height:2px;background:#fff"></div>
<div class="a" style="left:1048px;top:141px;width:293px;height:15px;background:#3399ff"></div>
<div class="a" style="left:1048px;top:156px;width:293px;height:1px;background:#7c7f84"></div>
<div class="a" style="left:1048px;top:157px;width:293px;height:15px;background:#fff"></div>
<div class="a" style="left:1048px;top:172px;width:293px;height:1px;background:#7c7f84"></div>
<div class="a" style="left:1145px;top:141px;width:1px;height:31px;background:#7c7f84"></div>
<div class="a" style="left:1242px;top:141px;width:1px;height:31px;background:#7c7f84"></div>
<div class="t" style="left:1049px;top:143px;font-size:11px;color:#fff;font-weight:normal;">box</div>
<div class="t" style="left:1244px;top:143px;font-size:11px;color:#fff;font-weight:normal;letter-spacing:-0.1px">id66f537a1</div>
<div class="t" style="left:1049px;top:159px;font-size:11px;color:#000;font-weight:normal;">copy</div>
<div class="t" style="left:1244px;top:159px;font-size:11px;color:#000;font-weight:normal;letter-spacing:-0.1px">id78266ab0_1</div>
<div class="a" style="left:1048px;top:412px;width:62px;height:21px;border:1px solid #707070;border-radius:3px;background:linear-gradient(#f3f3f3,#ebebeb 48%,#dddddd 52%,#cfcfcf);box-shadow:inset 0 0 0 1px rgba(255,255,255,.7)"></div><div class="t" style="left:1048px;top:417px;width:62px;text-align:center;font-size:11px">Delete</div>
<div class="a" style="left:1242px;top:412px;width:99px;height:21px;border:1px solid #707070;border-radius:3px;background:linear-gradient(#f3f3f3,#ebebeb 48%,#dddddd 52%,#cfcfcf);box-shadow:inset 0 0 0 1px rgba(255,255,255,.7)"></div><div class="t" style="left:1242px;top:417px;width:99px;text-align:center;font-size:11px">Delete History</div>
<div class="a" style="left:1047px;top:445px;width:295px;height:1px;background:#a0a0a0"></div>
<div class="t" style="left:1047px;top:460px;font-size:11px;color:#000;font-weight:normal;letter-spacing:-0.1px">Command: box</div>
<div class="a" style="left:1047px;top:483px;width:295px;height:160px;background:#efefef;border:1px solid #7c7f84"></div>
<div class="a" style="left:1048px;top:484px;width:293px;height:8px;background:#fff"></div><div class="a" style="left:1048px;top:492px;width:293px;height:14px;background:#f0f1f4"></div><div class="a" style="left:1048px;top:506px;width:293px;height:1px;background:#d8d8d8"></div><div class="a" style="left:1194px;top:486px;width:1px;height:20px;background:#dcdcdc"></div><div class="a" style="left:1195px;top:486px;width:1px;height:20px;background:#fff"></div><div class="t" style="left:1052px;top:492px;font-size:11px;color:#000;font-weight:normal;letter-spacing:-0.1px">Parameter</div><div class="t" style="left:1200px;top:492px;font-size:11px;color:#000;font-weight:normal;letter-spacing:-0.1px">Value</div>
<div class="a" style="left:1048px;top:507px;width:293px;height:1px;background:#fff"></div>
<div class="a" style="left:1048px;top:508px;width:293px;height:97px;background:#fff"></div>
<div class="a" style="left:1048px;top:524px;width:293px;height:1px;background:#7c7f84"></div>
<div class="t" style="left:1048px;top:511px;font-size:11px;color:#000;font-weight:normal;letter-spacing:-0.2px">pIniBaseX</div>
<div class="t" style="left:1196px;top:511px;font-size:11px;color:#000;font-weight:normal;letter-spacing:0px">0.30000001192092896</div>
<div class="a" style="left:1048px;top:540px;width:293px;height:1px;background:#7c7f84"></div>
<div class="t" style="left:1048px;top:527px;font-size:11px;color:#000;font-weight:normal;letter-spacing:-0.2px">pIniBaseY</div>
<div class="t" style="left:1196px;top:527px;font-size:11px;color:#000;font-weight:normal;letter-spacing:0px">-1.399999976158142</div>
<div class="a" style="left:1048px;top:556px;width:293px;height:1px;background:#7c7f84"></div>
<div class="t" style="left:1048px;top:543px;font-size:11px;color:#000;font-weight:normal;letter-spacing:-0.2px">pIniBaseZ</div>
<div class="t" style="left:1196px;top:543px;font-size:11px;color:#000;font-weight:normal;letter-spacing:0px">0.0</div>
<div class="a" style="left:1048px;top:572px;width:293px;height:1px;background:#7c7f84"></div>
<div class="t" style="left:1048px;top:559px;font-size:11px;color:#000;font-weight:normal;letter-spacing:-0.2px">width</div>
<div class="t" style="left:1196px;top:559px;font-size:11px;color:#000;font-weight:normal;letter-spacing:0px">-1.199999988079071</div>
<div class="a" style="left:1048px;top:588px;width:293px;height:1px;background:#7c7f84"></div>
<div class="t" style="left:1048px;top:575px;font-size:11px;color:#000;font-weight:normal;letter-spacing:-0.2px">depth</div>
<div class="t" style="left:1196px;top:575px;font-size:11px;color:#000;font-weight:normal;letter-spacing:0px">1.399999976158142</div>
<div class="a" style="left:1048px;top:604px;width:293px;height:1px;background:#7c7f84"></div>
<div class="t" style="left:1048px;top:591px;font-size:11px;color:#000;font-weight:normal;letter-spacing:-0.2px">height</div>
<div class="t" style="left:1196px;top:591px;font-size:11px;color:#000;font-weight:normal;letter-spacing:0px">1.06906498769361</div>
<div class="a" style="left:1194px;top:507px;width:1px;height:98px;background:#7c7f84"></div>
<div class="a" style="left:1340px;top:507px;width:1px;height:98px;background:#7c7f84"></div>
<div class="a" style="left:1286px;top:650px;width:55px;height:21px;border:1px solid #707070;border-radius:3px;background:linear-gradient(#f3f3f3,#ebebeb 48%,#dddddd 52%,#cfcfcf);box-shadow:inset 0 0 0 1px rgba(255,255,255,.7)"></div><div class="t" style="left:1286px;top:655px;width:55px;text-align:center;font-size:11px">Save</div>
<div class="a" style="left:10px;top:693px;width:1346px;height:23px;border-top:2px solid #747474;border-left:2px solid #747474;border-bottom:1px solid #fff;border-right:1px solid #fff"></div>
<div class="t" style="left:22px;top:700px;font-size:11px;color:#000;font-weight:normal;letter-spacing:-0.05px">X:</div>
<div class="t" style="left:38px;top:700px;font-size:11px;color:#000;font-weight:normal;letter-spacing:-0.05px">1.900000</div>
<div class="t" style="left:123px;top:700px;font-size:11px;color:#000;font-weight:normal;letter-spacing:-0.05px">Y:</div>
<div class="t" style="left:141px;top:700px;font-size:11px;color:#000;font-weight:normal;letter-spacing:-0.05px">1.500000</div>
<div class="t" style="left:226px;top:700px;font-size:11px;color:#000;font-weight:normal;letter-spacing:-0.05px">Z:</div>
<div class="t" style="left:241px;top:700px;font-size:11px;color:#000;font-weight:normal;letter-spacing:-0.05px">0.000000</div>
<div class="a" style="left:320px;top:696px;width:86px;height:18px;border:1px solid #8a8a8a;border-radius:2px;background:linear-gradient(#f6f6f6,#ececec 48%,#dedede 52%,#d6d6d6)"></div><div class="t" style="left:323px;top:700px;font-size:11px;color:#000;font-weight:normal;letter-spacing:-0.1px">Meters</div><svg style="left:393px;top:704px" width="9" height="6"><path d="M0.5 1h7l-3.5 4z" fill="#111"/></svg>
<div class="a" style="left:425px;top:695px;width:1px;height:20px;background:#e8eef6"></div>
<div class="t" style="left:441px;top:700px;font-size:11px;color:#000;font-weight:normal;">Pick:</div>
<div class="a" style="left:468px;top:696px;width:135px;height:18px;border:1px solid #8a8a8a;border-radius:2px;background:linear-gradient(#f6f6f6,#ececec 48%,#dedede 52%,#d6d6d6)"></div><div class="t" style="left:471px;top:700px;font-size:11px;color:#000;font-weight:normal;letter-spacing:-0.1px">PICK_NEAR</div><svg style="left:590px;top:704px" width="9" height="6"><path d="M0.5 1h7l-3.5 4z" fill="#111"/></svg>
<div class="t" style="left:620px;top:700px;font-size:11px;color:#000;font-weight:normal;letter-spacing:-0.1px">Selection:</div>
<div class="a" style="left:672px;top:696px;width:132px;height:18px;border:1px solid #8a8a8a;border-radius:2px;background:linear-gradient(#f6f6f6,#ececec 48%,#dedede 52%,#d6d6d6)"></div><div class="t" style="left:675px;top:700px;font-size:11px;color:#000;font-weight:normal;letter-spacing:-0.1px">SELECTION_ALL</div><svg style="left:791px;top:704px" width="9" height="6"><path d="M0.5 1h7l-3.5 4z" fill="#111"/></svg>
<div class="a" style="left:823px;top:695px;width:1px;height:20px;background:#e8eef6"></div>
<div class="a" style="left:1044px;top:696px;width:300px;height:16px;border:1px solid #8a8a8a;border-radius:2px;background:linear-gradient(#ececec,#dedede 50%,#cdcdcd 90%,#d8d8d8)"></div>
<div class="a" style="left:1045px;top:697px;width:2px;height:14px;background:#3399ff"></div>
<div class="t" style="left:1044px;top:698px;width:300px;text-align:center;font-size:11px;color:#3a96f0">Done.</div>
<div class="a" style="left:0px;top:727px;width:1366px;height:2px;background:#262626"></div></body></html>
